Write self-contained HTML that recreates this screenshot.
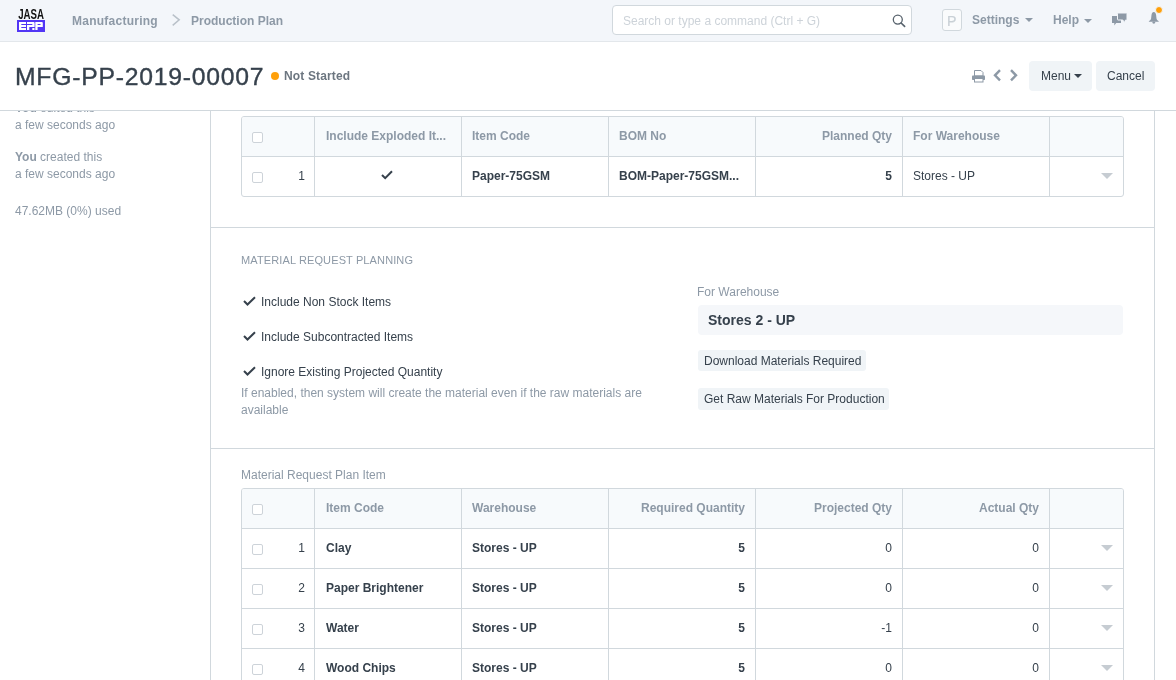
<!DOCTYPE html>
<html>
<head>
<meta charset="utf-8">
<style>
*{box-sizing:border-box;margin:0;padding:0}
html,body{width:1176px;height:680px;overflow:hidden;background:#fff}
body{will-change:transform}
body{font-family:"Liberation Sans",sans-serif;font-size:12px;color:#36414c;position:relative}
.abs{position:absolute}
.t{position:absolute;white-space:nowrap;line-height:1}
/* navbar */
#nav{position:absolute;left:0;top:0;width:1176px;height:42px;background:#f3f6fa;border-bottom:1px solid #e3e7eb;z-index:5}
#search{position:absolute;left:612px;top:5px;width:300px;height:30px;background:#fff;border:1px solid #d1d8dd;border-radius:4px}
/* page head */
#ph{position:absolute;left:0;top:42px;width:1176px;height:69px;background:#fff;border-bottom:1px solid #d1d8dd;z-index:4}
.btn{position:absolute;background:#f0f4f7;border-radius:4px}
/* layout */
#main{position:absolute;left:210px;top:110px;width:945px;height:600px;border-left:1px solid #d1d8dd;border-right:1px solid #d1d8dd}
.hline{position:absolute;height:1px;background:#d1d8dd}
.vline{position:absolute;width:1px;background:#d1d8dd}
.muted{color:#8d99a6}
.b{font-weight:bold}
.cb{position:absolute;width:11px;height:11px;border:1px solid #cdd3d9;border-radius:2px;background:#fff}
.grid{position:absolute;left:241px;width:883px;border:1px solid #d1d8dd;border-radius:3px;overflow:hidden;background:#fff}
.ghead{position:absolute;left:0;top:0;width:881px;height:39px;background:#f7fafc}
.caret{position:absolute;width:0;height:0;border-left:6px solid transparent;border-right:6px solid transparent;border-top:6px solid #c6ccd2}
</style>
</head>
<body>

<!-- NAVBAR -->
<div id="nav">
  <!-- logo -->
  <svg class="abs" style="left:16px;top:6px" width="32" height="28" viewBox="0 0 32 28">
    <text x="2.2" y="12.7" font-family="Liberation Sans" font-weight="bold" font-size="15" textLength="25.8" lengthAdjust="spacingAndGlyphs" fill="#111">JASA</text>
    <rect x="1" y="14" width="28" height="12" fill="#5236f5"/>
    <g fill="#fff">
      <path d="M3 16 H10 V18 H5.3 V19 H10 V21 H5.3 V22 H10 V24 H3 Z"/>
      <path d="M11 16 H17.6 Q18.6 16 18.6 17 V21 H13.3 V24 H11 V19 H16.3 V18 H11 Z"/>
      <rect x="16.3" y="22" width="2.2" height="2"/>
      <path d="M19.3 16 H25.8 Q26.8 16 26.8 17 V21 H21.6 V24 H19.3 Z M21.6 18 V19 H24.5 V18 Z" fill-rule="evenodd"/>
    </g>
  </svg>
  <div class="t b muted" style="left:72px;top:15px;font-size:12px;letter-spacing:0.25px">Manufacturing</div>
  <svg class="abs" style="left:171px;top:14px" width="10" height="13" viewBox="0 0 10 13"><path d="M1.7 0.6 L8.2 5.8 L1.7 11.4" fill="none" stroke="#b9c1c9" stroke-width="1.5"/></svg>
  <div class="t b muted" style="left:191px;top:15px;font-size:12px">Production Plan</div>

  <div id="search"><div class="t" style="left:10px;top:9px;color:#cdd3d9;font-size:12px">Search or type a command (Ctrl + G)</div>
    <svg class="abs" style="left:279px;top:7px" width="15" height="15" viewBox="0 0 15 15"><circle cx="5.8" cy="6.6" r="4.5" fill="none" stroke="#58636d" stroke-width="1.3"/><path d="M9.1 10 L12.6 13.4" stroke="#58636d" stroke-width="1.7" stroke-linecap="round"/></svg>
  </div>

  <div class="abs" style="left:942px;top:9px;width:20px;height:22px;border:1px solid #d1d8dd;border-radius:3px;background:#fafbfc"></div>
  <div class="t" style="left:947px;top:13.5px;font-size:14.2px;color:#c9d0d6;-webkit-text-stroke:0.2px #c9d0d6">P</div>
  <div class="t b muted" style="left:972px;top:14px;font-size:12px">Settings</div>
  <div class="abs" style="left:1025px;top:18px;width:0;height:0;border-left:4px solid transparent;border-right:4px solid transparent;border-top:4px solid #8d99a6"></div>
  <div class="t b muted" style="left:1053px;top:14px;font-size:12px">Help</div>
  <div class="abs" style="left:1084px;top:19px;width:0;height:0;border-left:4px solid transparent;border-right:4px solid transparent;border-top:4px solid #8d99a6"></div>
  <!-- comments icon -->
  <svg class="abs" style="left:1111px;top:12px" width="17" height="15" viewBox="0 0 17 15">
    <path d="M1 4 H10 V11 H5.2 L3.3 13.6 V11 H1 Z" fill="#8d99a6"/>
    <path d="M7 1 H15.5 Q16 1 16 1.5 V7.5 Q16 8 15.5 8 H14.5 L13.4 10.6 L11.8 8 H7 Q6.5 8 6.5 7.5 V1.5 Q6.5 1 7 1 Z" fill="#8d99a6" stroke="#f3f6fa" stroke-width="1"/>
  </svg>
  <!-- bell -->
  <svg class="abs" style="left:1148px;top:11px" width="12" height="14" viewBox="0 0 12 14">
    <path d="M5.8 1 C4.6 1 3.7 2 3.5 4 L3.1 7.6 C2.9 9 1.6 9.6 0.8 10.4 V10.8 H10.8 V10.4 C10 9.6 8.7 9 8.5 7.6 L8.1 4 C7.9 2 7 1 5.8 1 Z" fill="#8d99a6"/>
    <ellipse cx="5.8" cy="11.6" rx="1.5" ry="1.1" fill="#8d99a6"/>
  </svg>
  <div class="abs" style="left:1154.7px;top:5.8px;width:8.4px;height:8.4px;border-radius:50%;background:#ffa00a;border:1px solid #f3f6fa"></div>
</div>

<!-- PAGE HEAD -->
<div id="ph">
  <div class="t" style="left:15px;top:23px;font-size:24px;letter-spacing:0.74px;-webkit-text-stroke:0.35px #36414c;transform:scaleX(1.03);transform-origin:left top;color:#36414c">MFG-PP-2019-00007</div>
  <div class="abs" style="left:271px;top:30px;width:8px;height:8px;border-radius:50%;background:#ffa00a"></div>
  <div class="t b" style="left:284px;top:28px;font-size:12px;color:#6c7680;letter-spacing:0.15px">Not Started</div>

  <!-- print -->
  <svg class="abs" style="left:972px;top:28px" width="14" height="13" viewBox="0 0 14 13">
    <path d="M2.5 0.5 H9 L11 2.5 V6 H2.5 Z" fill="#fff" stroke="#8d99a6" stroke-width="1"/>
    <rect x="0" y="5.5" width="13" height="4.5" rx="0.8" fill="#8d99a6"/>
    <rect x="2.5" y="8.5" width="8.5" height="3.5" fill="#fff" stroke="#8d99a6" stroke-width="1"/>
  </svg>
  <svg class="abs" style="left:993px;top:27px" width="9" height="13" viewBox="0 0 9 13"><path d="M7 1.2 L2 6.3 L7 11.4" fill="none" stroke="#8d99a6" stroke-width="2.4"/></svg>
  <svg class="abs" style="left:1009px;top:27px" width="9" height="13" viewBox="0 0 9 13"><path d="M2 1.2 L7 6.3 L2 11.4" fill="none" stroke="#8d99a6" stroke-width="2.4"/></svg>

  <div class="btn" style="left:1029px;top:19px;width:63px;height:30px"></div>
  <div class="t" style="left:1041px;top:28px;font-size:12px;color:#36414c">Menu</div>
  <div class="abs" style="left:1074px;top:32px;width:0;height:0;border-left:4px solid transparent;border-right:4px solid transparent;border-top:4px solid #36414c"></div>
  <div class="btn" style="left:1096px;top:19px;width:59px;height:30px"></div>
  <div class="t" style="left:1107px;top:28px;font-size:12px;color:#36414c">Cancel</div>
</div>

<!-- SIDEBAR -->
<div class="t muted" style="left:15px;top:102px;font-size:12px"><span class="b">You</span> edited this</div>
<div class="t muted" style="left:15px;top:118.5px;font-size:12px">a few seconds ago</div>
<div class="t muted" style="left:15px;top:151px;font-size:12px"><span class="b">You</span> created this</div>
<div class="t muted" style="left:15px;top:167.5px;font-size:12px">a few seconds ago</div>
<div class="t muted" style="left:15px;top:205px;font-size:12px">47.62MB (0%) used</div>

<!-- MAIN -->
<div id="main"></div>
<div class="hline" style="left:211px;top:227px;width:943px"></div>
<div class="hline" style="left:211px;top:448px;width:943px"></div>


<!-- TABLE 1 -->
<div class="grid" style="top:116px;height:81px">
  <div class="ghead"></div>
  <div class="hline" style="left:0;top:39px;width:881px"></div>
  <div class="vline" style="left:72px;top:0;height:79px"></div>
  <div class="vline" style="left:219px;top:0;height:79px"></div>
  <div class="vline" style="left:366px;top:0;height:79px"></div>
  <div class="vline" style="left:513px;top:0;height:79px"></div>
  <div class="vline" style="left:660px;top:0;height:79px"></div>
  <div class="vline" style="left:807px;top:0;height:79px"></div>
</div>
<div class="cb" style="left:252px;top:132px"></div>
<div class="t b muted" style="left:326px;top:130px">Include Exploded It...</div>
<div class="t b muted" style="left:472px;top:130px">Item Code</div>
<div class="t b muted" style="left:619px;top:130px">BOM No</div>
<div class="t b muted" style="left:892px;top:130px;transform:translateX(-100%)">Planned Qty</div>
<div class="t b muted" style="left:913px;top:130px">For Warehouse</div>

<div class="cb" style="left:252px;top:172px"></div>
<div class="t" style="left:305px;top:170px;transform:translateX(-100%)">1</div>
<svg class="abs" style="left:381px;top:170px" width="12" height="10" viewBox="0 0 12 10"><path d="M1 5 L4.2 8.2 L11 1.3" fill="none" stroke="#36414c" stroke-width="2"/></svg>
<div class="t b" style="left:472px;top:170px">Paper-75GSM</div>
<div class="t b" style="left:619px;top:170px">BOM-Paper-75GSM...</div>
<div class="t b" style="left:892px;top:170px;transform:translateX(-100%)">5</div>
<div class="t" style="left:913px;top:170px">Stores - UP</div>
<div class="caret" style="left:1101px;top:173px"></div>

<!-- SECTION 2 -->
<div class="t muted" style="left:241px;top:255px;font-size:11px;letter-spacing:0.12px">MATERIAL REQUEST PLANNING</div>
<svg class="abs" style="left:243px;top:296px" width="13" height="10" viewBox="0 0 13 10"><path d="M1 5 L4.5 8.5 L12 1.2" fill="none" stroke="#36414c" stroke-width="2"/></svg>
<div class="t" style="left:261px;top:296px">Include Non Stock Items</div>
<svg class="abs" style="left:243px;top:331px" width="13" height="10" viewBox="0 0 13 10"><path d="M1 5 L4.5 8.5 L12 1.2" fill="none" stroke="#36414c" stroke-width="2"/></svg>
<div class="t" style="left:261px;top:331px">Include Subcontracted Items</div>
<svg class="abs" style="left:243px;top:366px" width="13" height="10" viewBox="0 0 13 10"><path d="M1 5 L4.5 8.5 L12 1.2" fill="none" stroke="#36414c" stroke-width="2"/></svg>
<div class="t" style="left:261px;top:366px">Ignore Existing Projected Quantity</div>
<div class="t muted" style="left:241px;top:387px">If enabled, then system will create the material even if the raw materials are</div>
<div class="t muted" style="left:241px;top:404px">available</div>

<div class="t muted" style="left:697px;top:286px">For Warehouse</div>
<div class="abs" style="left:698px;top:305px;width:425px;height:30px;background:#f5f7fa;border-radius:4px"></div>
<div class="t b" style="left:708px;top:313px;font-size:14px">Stores 2 - UP</div>
<div class="btn" style="left:698px;top:350px;width:168px;height:21px;border-radius:3px"></div>
<div class="t" style="left:704px;top:355px">Download Materials Required</div>
<div class="btn" style="left:698px;top:388px;width:191px;height:22px;border-radius:3px"></div>
<div class="t" style="left:704px;top:393px">Get Raw Materials For Production</div>

<!-- SECTION 3 -->
<div class="t muted" style="left:241px;top:469px">Material Request Plan Item</div>
<div class="grid" style="top:488px;height:200px">
  <div class="ghead"></div>
  <div class="hline" style="left:0;top:39px;width:881px"></div>
  <div class="hline" style="left:0;top:79px;width:881px"></div>
  <div class="hline" style="left:0;top:119px;width:881px"></div>
  <div class="hline" style="left:0;top:159px;width:881px"></div>
  <div class="vline" style="left:72px;top:0;height:200px"></div>
  <div class="vline" style="left:219px;top:0;height:200px"></div>
  <div class="vline" style="left:366px;top:0;height:200px"></div>
  <div class="vline" style="left:513px;top:0;height:200px"></div>
  <div class="vline" style="left:660px;top:0;height:200px"></div>
  <div class="vline" style="left:807px;top:0;height:200px"></div>
</div>
<div class="cb" style="left:252px;top:504px"></div>
<div class="t b muted" style="left:326px;top:502px">Item Code</div>
<div class="t b muted" style="left:472px;top:502px">Warehouse</div>
<div class="t b muted" style="left:745px;top:502px;transform:translateX(-100%)">Required Quantity</div>
<div class="t b muted" style="left:892px;top:502px;transform:translateX(-100%)">Projected Qty</div>
<div class="t b muted" style="left:1039px;top:502px;transform:translateX(-100%)">Actual Qty</div>
<div class="cb" style="left:252px;top:544px"></div>
<div class="t" style="left:305px;top:542px;transform:translateX(-100%)">1</div>
<div class="t b" style="left:326px;top:542px">Clay</div>
<div class="t b" style="left:472px;top:542px">Stores - UP</div>
<div class="t b" style="left:745px;top:542px;transform:translateX(-100%)">5</div>
<div class="t" style="left:892px;top:542px;transform:translateX(-100%)">0</div>
<div class="t" style="left:1039px;top:542px;transform:translateX(-100%)">0</div>
<div class="caret" style="left:1101px;top:545px"></div>
<div class="cb" style="left:252px;top:584px"></div>
<div class="t" style="left:305px;top:582px;transform:translateX(-100%)">2</div>
<div class="t b" style="left:326px;top:582px">Paper Brightener</div>
<div class="t b" style="left:472px;top:582px">Stores - UP</div>
<div class="t b" style="left:745px;top:582px;transform:translateX(-100%)">5</div>
<div class="t" style="left:892px;top:582px;transform:translateX(-100%)">0</div>
<div class="t" style="left:1039px;top:582px;transform:translateX(-100%)">0</div>
<div class="caret" style="left:1101px;top:585px"></div>
<div class="cb" style="left:252px;top:624px"></div>
<div class="t" style="left:305px;top:622px;transform:translateX(-100%)">3</div>
<div class="t b" style="left:326px;top:622px">Water</div>
<div class="t b" style="left:472px;top:622px">Stores - UP</div>
<div class="t b" style="left:745px;top:622px;transform:translateX(-100%)">5</div>
<div class="t" style="left:892px;top:622px;transform:translateX(-100%)">-1</div>
<div class="t" style="left:1039px;top:622px;transform:translateX(-100%)">0</div>
<div class="caret" style="left:1101px;top:625px"></div>
<div class="cb" style="left:252px;top:664px"></div>
<div class="t" style="left:305px;top:662px;transform:translateX(-100%)">4</div>
<div class="t b" style="left:326px;top:662px">Wood Chips</div>
<div class="t b" style="left:472px;top:662px">Stores - UP</div>
<div class="t b" style="left:745px;top:662px;transform:translateX(-100%)">5</div>
<div class="t" style="left:892px;top:662px;transform:translateX(-100%)">0</div>
<div class="t" style="left:1039px;top:662px;transform:translateX(-100%)">0</div>
<div class="caret" style="left:1101px;top:665px"></div>


</body>
</html>
